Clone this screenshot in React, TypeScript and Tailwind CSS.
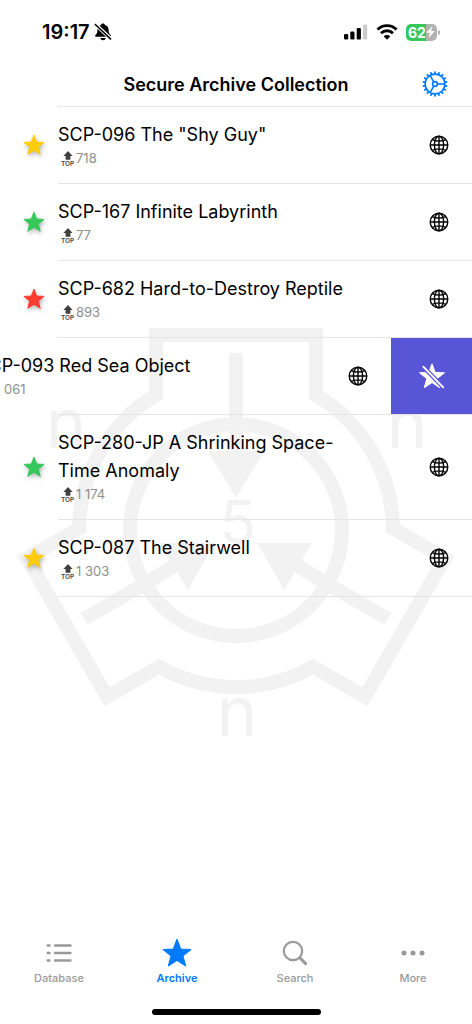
import React from "react";

const STAR = "M12 1.2l2.9 7.6 8.1.4-6.3 5.1 2.1 7.9L12 17.8l-6.8 4.4 2.1-7.9L1 9.2l8.1-.4z";

type Entry = { title: string; top: string; color: string; swiped?: boolean };

const entries: Entry[] = [
  { title: 'SCP-096 The "Shy Guy"', top: "718", color: "text-[#ffcc0a]" },
  { title: "SCP-167 Infinite Labyrinth", top: "77", color: "text-[#34c759]" },
  { title: "SCP-682 Hard-to-Destroy Reptile", top: "893", color: "text-[#ff3b30]" },
  { title: "SCP-093 Red Sea Object", top: "1 061", color: "text-[#ff3b30]", swiped: true },
  { title: "SCP-280-JP A Shrinking Space-Time Anomaly", top: "1 174", color: "text-[#34c759]" },
  { title: "SCP-087 The Stairwell", top: "1 303", color: "text-[#ffcc0a]" },
];

function Star({ className }: { className: string }) {
  return (
    <svg viewBox="0 0 24 24" className={className} fill="currentColor" stroke="currentColor" strokeWidth="1" strokeLinejoin="round" aria-hidden="true">
      <path d={STAR} />
    </svg>
  );
}

function Globe() {
  return (
    <svg viewBox="0 0 20 20" className="size-5" fill="none" stroke="currentColor" strokeWidth="1.4" aria-hidden="true">
      <circle cx="10" cy="10" r="8.8" />
      <ellipse cx="10" cy="10" rx="4.6" ry="8.8" />
      <path d="M10 1.2v17.6M1.2 10h17.6M3.3 4.6c3.8 2 9.6 2 13.4 0M3.3 15.4c3.8-2 9.6-2 13.4 0" />
    </svg>
  );
}

function TopIcon() {
  return (
    <svg viewBox="0 0 14 16" className="h-4 w-3.5 text-[#3f3f3f]" fill="currentColor" aria-hidden="true">
      <path d="M7 0l4.6 4.9H9.4v3.9H4.6V4.9H2.4z" />
      <text x="6.6" y="15.4" textAnchor="middle" fontFamily="Inter, sans-serif" fontWeight="600" fontSize="6.4">TOP</text>
    </svg>
  );
}

function Gear() {
  const teeth = Array.from({ length: 18 }, (_, i) => i * 20);
  return (
    <svg viewBox="-13 -13 26 26" className="size-[26px]" fill="none" stroke="currentColor" strokeWidth="1.6" aria-hidden="true">
      <circle r="9.9" />
      <circle r="2.4" />
      <path d="M2.4 0H10M-1.2-2.1L-5-8.6M-1.2 2.1L-5 8.6" />
      {teeth.map((a) => (
        <path key={a} d="M0-10.2V-12.5" strokeWidth="1.8" transform={`rotate(${a})`} />
      ))}
    </svg>
  );
}

function Emblem() {
  return (
    <svg viewBox="-220 -210 440 430" className="w-[440px] max-w-none shrink-0 text-[#f2f2f2]" fill="none" stroke="currentColor" strokeWidth="14" aria-hidden="true">
      <path d="M-80-135V-195H80V-135A157 157 0 0 1 156.9-1.8L208.9 28.2L128.9 166.8L76.9 136.8A157 157 0 0 1-76.9 136.8L-128.9 166.8L-208.9 28.2L-156.9-1.8A157 157 0 0 1-80-135z" />
      <circle r="106" />
      <path d="M0-177V-70M152 89L58 34M-152 89L-58 34" />
      <g fill="currentColor" stroke="none">
        <path d="M-28-79H28L0-32zM21 13H76L48.5 60zM-21 13H-76L-48.5 60z" />
        <g fontFamily="Inter, sans-serif" fontSize="68" textAnchor="middle">
          <text x="-170" y="-82">n</text>
          <text x="171" y="-82">n</text>
          <text x="1" y="206">n</text>
          <text x="2" y="14" fontSize="60">5</text>
        </g>
      </g>
    </svg>
  );
}

function RowBody({ entry }: { entry: Entry }) {
  return (
    <>
      <div className="flex w-[58px] shrink-0 items-center justify-end pr-[13px]">
        <Star className={`size-[22px] drop-shadow-[1px_2px_2px_rgba(0,0,0,0.3)] ${entry.color}`} />
      </div>
      <div className="min-w-0 flex-1 py-3.5">
        <h2 className="max-w-[300px] text-[18px] leading-7 text-black">{entry.title}</h2>
        <p className="flex h-5 items-center gap-px pl-[3px] text-[13px] text-[#8e8e8e]">
          <TopIcon />
          {entry.top}
        </p>
      </div>
      <button aria-label={`Open ${entry.title} on the web`} className="mr-[23px] flex size-5 shrink-0 self-center">
        <Globe />
      </button>
    </>
  );
}

function StatusBar() {
  return (
    <div className="flex h-16 items-center justify-between pr-8 pl-[42px]">
      <div className="flex items-center gap-1 text-[20px] font-semibold">
        19:17
        <svg viewBox="0 0 18 18" className="size-[18px]" fill="currentColor" aria-hidden="true">
          <path d="M9 .5c1.1 0 1.8.6 1.9 1.4 2.4.7 3.7 2.5 3.7 5 0 3 .8 4 2 5.1.6.6.3 1.7-.6 1.7H2c-.9 0-1.2-1.1-.6-1.7 1.2-1.1 2-2.1 2-5.1 0-2.5 1.3-4.3 3.7-5C7.2 1.1 7.9.5 9 .5zM6.3 15h5.4c-.3 1.5-1.3 2.2-2.7 2.2S6.6 16.5 6.3 15z" />
          <path d="M1.3 1.4L17 16" stroke="white" strokeWidth="3.6" />
          <path d="M.8 1L17 16.4" stroke="black" strokeWidth="1.5" />
        </svg>
      </div>
      <div className="flex items-center gap-2">
        <svg viewBox="0 0 25 16" className="h-4 w-[25px]" aria-hidden="true">
          <rect x="1" y="10" width="4.2" height="5.5" rx="1.2" />
          <rect x="7.3" y="7.5" width="4.2" height="8" rx="1.2" />
          <rect x="13.7" y="4" width="4.2" height="11.5" rx="1.2" />
          <rect x="20" y=".5" width="4.2" height="15" rx="1.2" fill="#cccccc" />
        </svg>
        <svg viewBox="0 0 22 16" className="h-4 w-[22px]" fill="none" stroke="black" strokeWidth="2.9" aria-hidden="true">
          <path d="M1.5 5.5a13.5 13.5 0 0 1 19 0M5 9.2a8.5 8.5 0 0 1 12 0" />
          <path d="M11 15.7L7.7 12.4a4.7 4.7 0 0 1 6.6 0z" fill="black" stroke="none" />
        </svg>
        <div className="flex items-center gap-px">
          <div className="flex h-[17px] w-[31px] items-center justify-center rounded-[5px] bg-linear-to-r from-[#34c759] from-64% to-[#b3b3b3] to-64% text-[14px] font-bold text-white">
            62
            <svg viewBox="0 0 9 12" className="h-3 w-[9px]" fill="currentColor" aria-hidden="true">
              <path d="M6.5 0L.3 6.8H4L2.6 12 8.8 5.1H5.1z" />
            </svg>
          </div>
          <span className="h-[5px] w-0.5 rounded-r-full bg-[#b3b3b3]" />
        </div>
      </div>
    </div>
  );
}

function Tab({ label, active, children }: { label: string; active?: boolean; children: React.ReactNode }) {
  return (
    <a href={`#${label.toLowerCase()}`} aria-current={active ? "page" : undefined} className={`flex flex-1 flex-col items-center gap-0.5 text-[11px] leading-4 ${active ? "font-semibold text-[#007aff]" : "font-medium text-[#999999]"}`}>
      <span className="flex h-[30px] items-center">{children}</span>
      {label}
    </a>
  );
}

export default function App() {
  return (
    <div className="relative flex min-h-screen flex-col overflow-hidden bg-white font-['Inter',sans-serif] text-black">
      <div className="pointer-events-none absolute inset-x-0 top-80 flex justify-center">
        <Emblem />
      </div>
      <header className="relative">
        <StatusBar />
        <div className="grid h-[42px] grid-cols-[1fr_auto_1fr] items-center">
          <h1 className="col-start-2 pb-0.5 text-[18px] font-semibold">Secure Archive Collection</h1>
          <button aria-label="Settings" className="mr-6 mb-0.5 justify-self-end text-[#007aff]">
            <Gear />
          </button>
        </div>
        <div className="ml-[58px] h-px bg-[#e5e5e5]" />
      </header>
      <main className="relative flex-1">
        <ul>
          {entries.map((entry) => (
            <li key={entry.title}>
              <div className="flex overflow-hidden">
                <div className={`flex w-full shrink-0 ${entry.swiped ? "-ml-[81px]" : ""}`}>
                  <RowBody entry={entry} />
                </div>
                {entry.swiped && (
                  <button aria-label="Remove from archive" className="flex w-[81px] shrink-0 items-center justify-center bg-[#5856d6] text-white">
                    <svg viewBox="0 0 28 28" className="size-7" fill="currentColor" aria-hidden="true">
                      <path d="M14 1.8l3.2 8.6 9.3.4-7.3 5.8 2.5 9.1L14 20.6l-7.7 5.1 2.5-9.1-7.3-5.8 9.3-.4z" stroke="currentColor" strokeLinejoin="round" />
                      <path d="M4.5 4L26 26" stroke="#5856d6" strokeWidth="4.4" />
                      <path d="M5.3 4.7L25.2 25.3" stroke="currentColor" strokeWidth="1.9" strokeLinecap="round" />
                    </svg>
                  </button>
                )}
              </div>
              <div className="ml-[58px] h-px bg-[#e5e5e5]" />
            </li>
          ))}
        </ul>
      </main>
      <nav className="relative flex pb-[23px]">
        <Tab label="Database">
          <svg viewBox="0 0 26 20" className="h-5 w-[26px]" stroke="currentColor" strokeWidth="2.4" strokeLinecap="round" aria-hidden="true">
            <path d="M1.7 2.5h1.8M9 2.5h15.5M1.7 10h1.8M9 10h15.5M1.7 17.5h1.8M9 17.5h15.5" />
          </svg>
        </Tab>
        <Tab label="Archive" active>
          <Star className="size-[30px]" />
        </Tab>
        <Tab label="Search">
          <svg viewBox="0 0 26 26" className="size-[26px]" fill="none" stroke="currentColor" strokeWidth="2.2" strokeLinecap="round" aria-hidden="true">
            <circle cx="11" cy="11" r="9.2" />
            <path d="M17.8 17.8L23.6 23.6" strokeWidth="3" />
          </svg>
        </Tab>
        <Tab label="More">
          <svg viewBox="0 0 24 6" className="h-1.5 w-6" fill="currentColor" aria-hidden="true">
            <circle cx="3" cy="3" r="2.5" />
            <circle cx="12" cy="3" r="2.5" />
            <circle cx="21" cy="3" r="2.5" />
          </svg>
        </Tab>
      </nav>
      <div className="relative mx-auto mb-[9px] h-1.5 w-[169px] rounded-full bg-black" />
    </div>
  );
}
